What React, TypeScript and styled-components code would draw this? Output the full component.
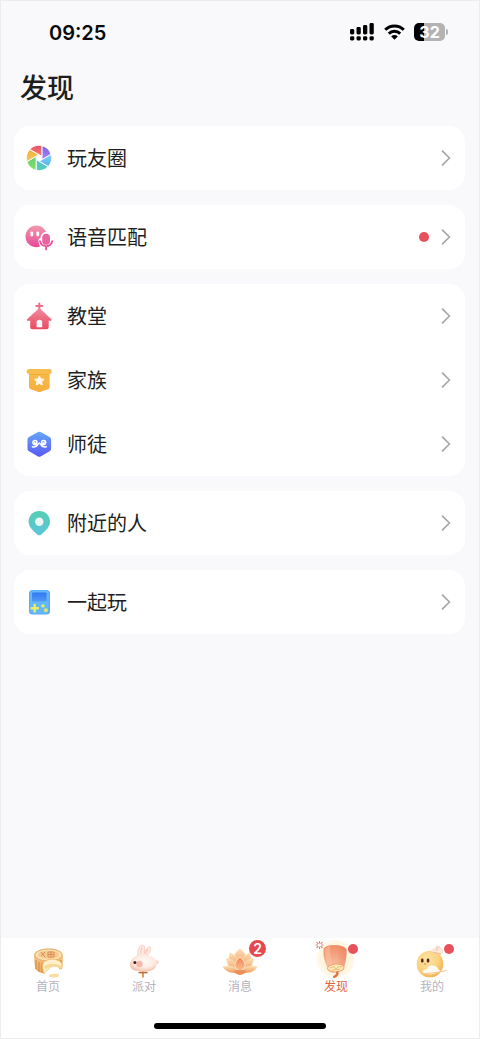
import React from 'react';
import styled, { createGlobalStyle } from 'styled-components';

const GlobalStyle = createGlobalStyle`
  *, *::before, *::after { box-sizing: border-box; }
  body {
    margin: 0;
    background: #f9f9fb;
    color: #1e1e20;
    font-family: "Noto Sans CJK SC", "Noto Sans", sans-serif;
  }
  h1, ul { margin: 0; padding: 0; }
  svg { display: block; flex: none; }
`;

const Page = styled.div`
  min-height: 100vh;
  display: flex;
  flex-direction: column;
  border: 1px solid #ececef;
`;

const StatusBar = styled.header`
  display: flex;
  align-items: center;
  justify-content: space-between;
  height: 62px;
  padding: 0 34px 0 48px;
`;

const Clock = styled.time`
  padding-top: 1px;
  font: 600 20px/24px Inter, sans-serif;
  color: #0a0a0a;
`;

const StatusIcons = styled.div`
  display: flex;
  align-items: center;
  gap: 9px;
`;

const Battery = styled.div`
  position: relative;
  display: flex;
  align-items: center;
  justify-content: center;
  width: 31px;
  height: 18px;
  border-radius: 5px;
  background: linear-gradient(90deg, #000 0 10px, #b3b3b5 10px);
  color: #fff;
  font: 700 16px/18px Inter, sans-serif;

  &::after {
    content: "";
    position: absolute;
    right: -3px;
    top: 6px;
    width: 2px;
    height: 6px;
    border-radius: 0 2px 2px 0;
    background: #b3b3b5;
  }
`;

const Title = styled.h1`
  padding: 0 19px;
  font-size: 27px;
  font-weight: 500;
  line-height: 48px;
`;

const Main = styled.main`
  flex: 1;
  display: flex;
  flex-direction: column;
  gap: 15px;
  padding: 15px 14px 24px 13px;
`;

const Card = styled.ul`
  list-style: none;
  background: #fff;
  border-radius: 16px;
`;

const Row = styled.button`
  display: flex;
  align-items: center;
  gap: 14px;
  width: 100%;
  height: 64px;
  padding: 0 14px 0 11px;
  border: 0;
  background: none;
  color: inherit;
  font: inherit;
  font-size: 20px;
  line-height: 28px;
  text-align: left;
  cursor: pointer;
`;

const RowLabel = styled.span`
  flex: 1;
`;

const Dot = styled.span`
  width: 10px;
  height: 10px;
  border-radius: 50%;
  background: #e8505b;
`;

const Trailing = styled.span`
  display: flex;
  align-items: center;
  gap: 12px;
`;

const Footer = styled.footer`
  background: #fff;
`;

const Tabs = styled.nav`
  display: grid;
  grid-template-columns: repeat(5, 1fr);
  margin: 0 -1px;
`;

const Tab = styled.a<{ $active?: boolean }>`
  display: flex;
  flex-direction: column;
  align-items: center;
  color: ${(p) => (p.$active ? '#e2673f' : '#b4b4bd')};
  font-size: 12px;
  line-height: 16px;
  text-decoration: none;
`;

const TabIcon = styled.span`
  position: relative;
  display: block;
`;

const TabDot = styled(Dot)`
  position: absolute;
  top: 6px;
  right: 2px;
`;

const Count = styled.span`
  position: absolute;
  top: 2px;
  right: -2px;
  width: 17px;
  height: 17px;
  border-radius: 50%;
  background: #e5484f;
  color: #fff;
  font: 600 14px/17px Inter, sans-serif;
  text-align: center;
`;

const HomeIndicator = styled.div`
  width: 36%;
  height: 6px;
  margin: 29px auto 9px;
  border-radius: 3px;
  background: #000;
`;

const Signal = () => (
  <svg width="25" height="18" viewBox="0 0 25 18" aria-hidden="true">
    {[6, 4, 2, 0].map((top, i) => (
      <g key={top}>
        <rect x={i * 6.5} y={top} width="4.3" height={11.5 - top} rx="1.4" />
        <rect x={i * 6.5} y="13.2" width="4.3" height="4.2" rx="1.4" />
      </g>
    ))}
  </svg>
);

const Wifi = () => (
  <svg width="21" height="16" viewBox="0 0 21 16" aria-hidden="true">
    <g fill="none" stroke="#000" strokeWidth="2.9">
      <path d="M1.2 5.8a13.2 13.2 0 0 1 18.6 0" />
      <path d="M4.8 9.6a8.1 8.1 0 0 1 11.4 0" />
    </g>
    <path d="M10.5 15.8 7.2 12.4a4.7 4.7 0 0 1 6.6 0Z" />
  </svg>
);

const Chevron = () => (
  <svg width="10" height="16" viewBox="0 0 10 16" aria-hidden="true">
    <path d="M1.5 1.2 8.5 8l-7 6.8" fill="none" stroke="#a5a5ad" strokeWidth="1.7" strokeLinecap="round" strokeLinejoin="round" />
  </svg>
);

type Stops = [string, string];
const Grad = ({ id, stops }: { id: string; stops: Stops }) => (
  <linearGradient id={id} x1="0" y1="0" x2="0" y2="1">
    <stop stopColor={stops[0]} />
    <stop offset="1" stopColor={stops[1]} />
  </linearGradient>
);

const RowSvg = ({ children }: { children: React.ReactNode }) => (
  <svg width="28" height="28" viewBox="0 0 28 28" aria-hidden="true">{children}</svg>
);

const polar = (r: number, deg: number) =>
  `${(14 + r * Math.cos((deg * Math.PI) / 180)).toFixed(2)} ${(14 + r * Math.sin((deg * Math.PI) / 180)).toFixed(2)}`;

const blades: Stops[] = [
  ['#7a62ee', '#a585f3'],
  ['#86cdfb', '#55b4ef'],
  ['#59b9dc', '#54d2b0'],
  ['#58cc77', '#8ee164'],
  ['#eeb03a', '#f5c95c'],
  ['#e85263', '#f0807a'],
];

const Aperture = () => (
  <RowSvg>
    <defs>{blades.map((s, i) => <Grad key={i} id={`blade${i}`} stops={s} />)}</defs>
    {blades.map((_, i) => (
      <path
        key={i}
        d={`M${polar(12.6, -77 + i * 60)}A12.6 12.6 0 0 1 ${polar(12.6, -17 + i * 60)}L${polar(3.4, 30 + i * 60)}Z`}
        fill={`url(#blade${i})`}
        stroke="#fff"
        strokeWidth="0.9"
      />
    ))}
  </RowSvg>
);

const Voice = () => (
  <RowSvg>
    <defs><Grad id="voice" stops={['#f09aaa', '#e8489b']} /></defs>
    <circle cx="11.3" cy="13.4" r="10.8" fill="url(#voice)" />
    <rect x="5.4" y="8.4" width="2.8" height="5" rx="1.4" fill="#fff" />
    <rect x="11.4" y="8.4" width="2.8" height="5" rx="1.4" fill="#fff" />
    <path d="M13.4 17.2q-.1-1.800 2-2a5.600 6 0 0 1 11.200-.4V27h-6q-7-1.500-7.200-9.800Z" fill="#fff" />
    <rect x="17.2" y="10.8" width="7.800" height="11" rx="3.9" fill="#e8669f" />
    <path d="M15 18.200a6.200 6 0 0 0 12.200 0M21.100 24.200v2.200" fill="none" stroke="#e6529b" strokeWidth="1.8" strokeLinecap="round" />
  </RowSvg>
);

const Church = () => (
  <RowSvg>
    <defs><Grad id="church" stops={['#f08a9c', '#ea4a61']} /></defs>
    <path d="M14.3 1.600v7M11.300 4h6" stroke="#ea7186" strokeWidth="2.100" strokeLinecap="round" />
    <path d="M13.2 6.9q1.1-.9 2.2 0L26.2 17c.8.8.4 1.8-.7 1.8h-1.8v6c0 1.8-.8 2.4-2.3 2.4H7.600c-1.5 0-2.4-.6-2.4-2.4v-6H3c-1.1 0-1.5-1-.7-1.800Z" fill="url(#church)" />
    <path d="M11.600 25.200v-4.600a2.800 2.800 0 0 1 5.600 0v4.600Z" fill="#fff" />
  </RowSvg>
);

const Family = () => (
  <RowSvg>
    <defs><Grad id="family" stops={['#f5bd4b', '#f7ad3c']} /></defs>
    <path d="M4 5h20.600v16.200q0 1.200-1.200 1.700l-7.600 2.900q-1.500.6-3 0l-7.600-2.900Q4 22.400 4 21.200Z" fill="url(#family)" />
    <path d="M4.600 7.500h19.400v1.200H4.600Z" fill="#eda436" />
    <rect x="1.600" y="3" width="25.200" height="5" rx="2.500" fill="#f6bd4d" />
    <path d="m14.300 9.900 1.500 3 3.300.5-2.400 2.300.6 3.300-3-1.600-3 1.600.6-3.300-2.400-2.300 3.300-.5Z" fill="#fff8e9" stroke="#fff8e9" strokeLinejoin="round" />
  </RowSvg>
);

const Mentor = () => (
  <RowSvg>
    <defs><Grad id="mentor" stops={['#64a8f6', '#5b58f4']} /></defs>
    <path d="M12.600 2.200q1.700-1 3.400 0l8.600 4.900q1.500.9 1.500 2.600v9q0 1.700-1.500 2.600l-8.600 4.900q-1.700 1-3.400 0l-8.600-4.900q-1.500-.9-1.500-2.600v-9q0-1.700 1.500-2.600Z" fill="url(#mentor)" />
    <g fill="none" stroke="#fff" strokeWidth="1.500" strokeLinecap="round">
      <path d="M9.600 12.600c.2 1.500 2.700 1.100 2.400-.7-.4-2.300-4.300-1.900-4.100.9.200 2.600 4.400 2.400 6.300.4M12.700 14.600c-1.200 2.400-3.300 2.800-5.400 2.100" />
      <path d="M19 12.600c-.2 1.500-2.700 1.100-2.400-.7.400-2.300 4.300-1.900 4.100.9-.2 2.600-4.400 2.400-6.300.4M15.900 14.600c1.200 2.400 3.300 2.800 5.400 2.100" />
    </g>
  </RowSvg>
);

const Nearby = () => (
  <RowSvg>
    <defs><Grad id="nearby" stops={['#55cdb2', '#5cc6dd']} /></defs>
    <path d="M14.300 2C8 2 3.600 6.700 3.600 12.500c0 5.300 3.700 8.400 8.600 12.900q2.100 1.900 4.200 0c4.900-4.500 8.600-7.600 8.600-12.900C25 6.700 20.600 2 14.300 2Z" fill="url(#nearby)" />
    <circle cx="14.300" cy="12.700" r="4.200" fill="#edf6f5" />
  </RowSvg>
);

const Play = () => (
  <RowSvg>
    <defs><Grad id="screen" stops={['#3178ef', '#5298f8']} /></defs>
    <rect x="4" y="2" width="21" height="24.600" rx="3.500" fill="#5aa9f4" />
    <rect x="4.700" y="2.600" width="19" height="23" rx="3" fill="#62b8fb" />
    <rect x="7" y="4.400" width="14.600" height="9" rx="1.200" fill="url(#screen)" />
    <path d="M9.700 17v6.400M6.500 20.200h6.400" stroke="#f1ec5c" strokeWidth="2.400" strokeLinecap="round" />
    <circle cx="18" cy="17.900" r="1.700" fill="#f1ec5c" />
    <circle cx="20.900" cy="22.300" r="2" fill="#e3e36d" />
  </RowSvg>
);

const TabSvg = ({ children }: { children: React.ReactNode }) => (
  <svg width="48" height="40" viewBox="0 0 48 40" aria-hidden="true">{children}</svg>
);

const Mooncake = () => (
  <TabSvg>
    <defs><Grad id="cake" stops={['#f7cf91', '#eba65c']} /></defs>
    <path d="M10 18c0-5 6-7.500 14.500-7.500S39 13 39 18l-.6 11q-.8 2.600-3 2.500-.5-4-7-4.500-6 .3-8.400 8.500-7.500-1.500-9-5.500Z" fill="url(#cake)" />
    <path d="M12 22v9M15 24v10M18 25v10M37 22v9" stroke="#d88d4a" strokeWidth="1.100" />
    <ellipse cx="24.500" cy="17" rx="13.800" ry="6" fill="#fae0b2" stroke="#e9b074" />
    <ellipse cx="24.500" cy="16.700" rx="10.500" ry="4" fill="#f5ca8e" />
    <path d="m17 14 4 5m0-5-4 4m7-4h6v5h-6Zm3 0v5m-3-2.500h6" fill="none" stroke="#d98b55" strokeWidth="1" />
    <path d="M18.500 29c-1-9 15-10.500 19.500-3.200l-.3 5.200c-4-5-11-3.700-14 1l-4 4Z" fill="#fff1cc" stroke="#efb867" strokeWidth=".8" />
    <path d="M20 28.500c4-3.500 12-3.800 17-.5v3c-4-4-12-3-15.500.5Z" fill="#f9d795" />
    <path d="M25 37q4-1.700 10-1l-1 3q-5 1-9-.5Z" fill="#fbdc9f" />
  </TabSvg>
);

const Rabbit = () => (
  <TabSvg>
    <defs>
      <radialGradient id="fur" cx=".5" cy=".42" r=".65">
        <stop stopColor="#fffaf6" /><stop offset=".55" stopColor="#fdebe2" /><stop offset="1" stopColor="#f2b398" />
      </radialGradient>
    </defs>
    <path d="M23 33.500v6" stroke="#eb9c45" strokeWidth="2" />
    <path d="M18 18.500c-1-5 1-11 4.400-11.300 2.300-.3 2.700 3 1.700 8 2-4.500 4.600-7.100 6-6.200 1.600 1.500-.5 6-3 9.200Z" fill="#fdebe4" stroke="#f3c5b4" strokeWidth=".8" />
    <path d="M20.500 15.500q.2-4 1.600-6.300m3.200 7q1.200-3.500 2.800-5" fill="none" stroke="#f6c5b7" strokeWidth="1.100" />
    <path d="M15.500 18.500C19 15.600 25 16 28 18c3.600-.2 6.500 1.300 8 4.500 1.500-.8 3.200.5 2.500 2.200-.3.900-1.200 1.300-2 1.200-.3 5-4.500 7.500-12.500 7.500-9 0-14.200-1.900-14-7 .2-4 2.600-6.200 5.500-7.900Z" fill="url(#fur)" />
    <circle cx="19.500" cy="26" r="3.200" fill="#f19b8d" opacity=".65" />
    <circle cx="14.900" cy="24.500" r="1.500" fill="#54151f" />
    <path d="M18.500 34.600h9" stroke="#bd693e" strokeWidth="1.500" />
  </TabSvg>
);

const Lotus = () => (
  <TabSvg>
    <defs>
      <Grad id="petal" stops={['#fce0b4', '#f0955f']} />
      <Grad id="petalFront" stops={['#ee8455', '#fbc795']} />
    </defs>
    <g fill="url(#petal)" stroke="#fbe2bd" strokeWidth=".5">
      <path d="M24 10.500q8 6 6 14l-6 7-6-7q-2-8 6-14Z" />
      <path d="M14 14.500q6 2.500 8 8l-1 10h-5q-5-9-2-18ZM34 14.500q-6 2.500-8 8l1 10h5q5-9 2-18Z" />
      <path d="M10.500 20q7.500 1.500 11 7l1 7.500q-11-1-12-14.500ZM37.500 20q-7.500 1.500-11 7l-1 7.500q11-1 12-14.500Z" />
      <path d="M6.500 28.500q8-1.500 13.500 2l4 4q-13 2.500-17.500-6ZM41.500 28.500q-8-1.500-13.500 2l-4 4q13 2.500 17.500-6Z" />
    </g>
    <path d="M24 19q6 5 5 10l-5 5-5-5q-1-5 5-10Z" fill="url(#petalFront)" stroke="#fff0d5" strokeWidth=".8" />
    <path d="M17.500 33q6.500-2 13 0-2 3.500-6.500 4-4.500-.5-6.500-4Z" fill="#ef8e57" />
  </TabSvg>
);

const Lantern = () => (
  <TabSvg>
    <defs>
      <Grad id="lantern" stops={['#f18e68', '#fbcbab']} />
      <radialGradient id="halo">
        <stop stopColor="#fff0d2" /><stop offset=".8" stopColor="#fff5e0" /><stop offset="1" stopColor="#fff9ee" />
      </radialGradient>
      <linearGradient id="panel">
        <stop stopColor="#e86f50" stopOpacity="0" />
        <stop offset="1" stopColor="#e86f50" stopOpacity=".45" />
      </linearGradient>
    </defs>
    <circle cx="23.500" cy="21" r="19" fill="url(#halo)" />
    <path d="M11.500 11.500Q12.500 7 22 7t12.500 4.500q.5 8.500-2.800 19.500c-4 4.500-12 4.500-15.700 0Q10.500 20 11.500 11.500Z" fill="url(#lantern)" />
    <path d="M24 7.200q9.500 0 10.500 4.300.5 8.500-2.800 18.500h-7q2-12-.7-22.800Z" fill="url(#panel)" />
    <path d="M13 12q0 9 4.500 17h4q-4-10-3.500-21-4 1-5 4Z" fill="#fbc3a0" opacity=".5" />
    <ellipse cx="23.800" cy="30" rx="8.300" ry="4" transform="rotate(-4 23.800 30)" fill="#ffeab5" stroke="#f0a070" strokeWidth="1" />
    <path d="m18 30 4-1.500 2 2.500 3-2.500 3 .7M20 32.500l4-1.500 4 1" fill="none" stroke="#f4b878" strokeWidth="1" />
    <path d="M25.500 34.500q0 3-3.300 4.300" fill="none" stroke="#e3713f" strokeWidth="2.400" strokeLinecap="round" />
    <path d="M7.500 3.500v1.500M7.500 9v1.500M4 7h1.500M9.500 7H11M4.800 4.300l1.200 1.200M10.200 4.300 9 5.500M4.800 9.700l1.200-1.200M10.200 9.700 9 8.500" stroke="#e37d69" strokeWidth="1.100" strokeLinecap="round" />
  </TabSvg>
);

const Chick = () => (
  <TabSvg>
    <defs>
      <radialGradient id="chick" cx=".4" cy=".35" r=".7">
        <stop stopColor="#fde5a8" /><stop offset=".6" stopColor="#fad27f" /><stop offset="1" stopColor="#f3ae4d" />
      </radialGradient>
    </defs>
    <circle cx="22" cy="26" r="13.300" fill="url(#chick)" />
    <path d="M23 14q1-3.500 4-3 .5-3.500 3-3 2-.5 2.500 2.500 3 .5 2 4l-1.500 2q-5-2-10-2.500Z" fill="#fdeadd" stroke="#f6cdb4" strokeWidth=".6" />
    <path d="M30 9q-2 2-1 4M25 14l8 2" fill="none" stroke="#f0b693" strokeWidth=".9" />
    <rect x="13" y="20.500" width="2.500" height="4" rx="1.200" fill="#5c2a10" />
    <rect x="18.800" y="20.500" width="2.500" height="4" rx="1.200" fill="#5c2a10" />
    <path d="M15.700 25.600q1.300-.7 2.600 0l-1.300 1.700Z" fill="#ee8b39" />
    <path d="M14 34.500q2-4 4.500-3 1.500-4 5-4 5-.5 7 4l2.500 1.800q-4 1.700-7 2.400-6 1.500-12-1.200Z" fill="#fffaf1" />
    <path d="M17 35.500q9 0 21.500-3" fill="none" stroke="#f7c68d" strokeWidth="1.100" />
  </TabSvg>
);

const groups = [
  [{ label: '玩友圈', Icon: Aperture }],
  [{ label: '语音匹配', Icon: Voice, unread: true }],
  [
    { label: '教堂', Icon: Church },
    { label: '家族', Icon: Family },
    { label: '师徒', Icon: Mentor },
  ],
  [{ label: '附近的人', Icon: Nearby }],
  [{ label: '一起玩', Icon: Play }],
] as { label: string; Icon: React.FC; unread?: boolean }[][];

const tabs: { label: string; href: string; Icon: React.FC; active?: boolean; dot?: boolean; count?: number }[] = [
  { label: '首页', href: '#home', Icon: Mooncake },
  { label: '派对', href: '#party', Icon: Rabbit },
  { label: '消息', href: '#messages', Icon: Lotus, count: 2 },
  { label: '发现', href: '#discover', Icon: Lantern, active: true, dot: true },
  { label: '我的', href: '#me', Icon: Chick, dot: true },
];

export default function App() {
  return (
    <Page>
      <GlobalStyle />
      <StatusBar>
        <Clock>09:25</Clock>
        <StatusIcons>
          <Signal />
          <Wifi />
          <Battery>32</Battery>
        </StatusIcons>
      </StatusBar>
      <Title>发现</Title>
      <Main>
        {groups.map((rows) => (
          <Card key={rows[0].label}>
            {rows.map(({ label, Icon, unread }) => (
              <li key={label}>
                <Row type="button">
                  <Icon />
                  <RowLabel>{label}</RowLabel>
                  <Trailing>
                    {unread && <Dot />}
                    <Chevron />
                  </Trailing>
                </Row>
              </li>
            ))}
          </Card>
        ))}
      </Main>
      <Footer>
        <Tabs>
          {tabs.map(({ label, href, Icon, active, dot, count }) => (
            <Tab key={label} href={href} $active={active} aria-current={active ? 'page' : undefined}>
              <TabIcon>
                <Icon />
                {dot && <TabDot />}
                {count && <Count>{count}</Count>}
              </TabIcon>
              {label}
            </Tab>
          ))}
        </Tabs>
        <HomeIndicator />
      </Footer>
    </Page>
  );
}
